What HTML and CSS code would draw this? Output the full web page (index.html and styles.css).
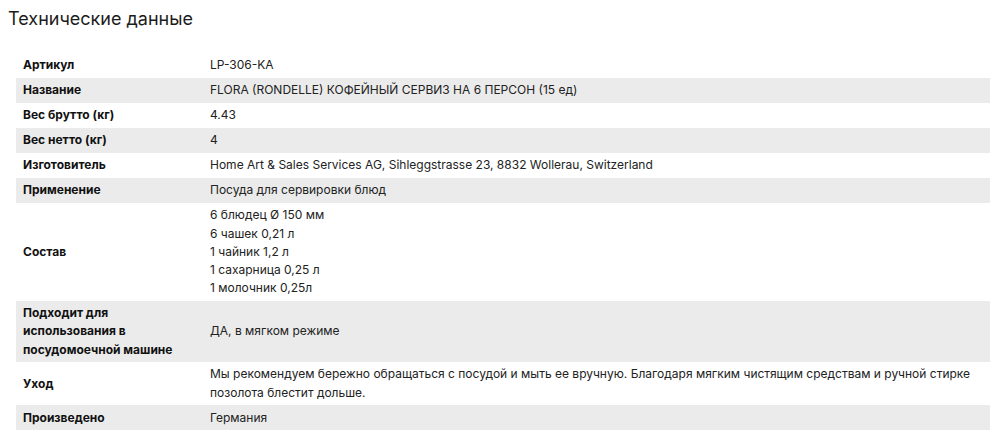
FILE: index.html
```html
<!DOCTYPE html>
<html lang="ru">
<head>
<meta charset="utf-8">
<link rel="stylesheet" href="styles.css">
</head>
<body>
<section class="specs">
  <h2 class="specs-title">Технические данные</h2>
  <table class="specs-table">
    <colgroup><col class="col-label"><col></colgroup>
    <tbody>
      <tr><th>Артикул</th><td>LP-306-KA</td></tr>
      <tr><th>Название</th><td>FLORA (RONDELLE) КОФЕЙНЫЙ СЕРВИЗ НА 6 ПЕРСОН (15 ед)</td></tr>
      <tr><th>Вес брутто (кг)</th><td>4.43</td></tr>
      <tr><th>Вес нетто (кг)</th><td>4</td></tr>
      <tr><th>Изготовитель</th><td>Home Art &amp; Sales Services AG, Sihleggstrasse 23, 8832 Wollerau, Switzerland</td></tr>
      <tr><th>Применение</th><td>Посуда для сервировки блюд</td></tr>
      <tr><th>Состав</th><td>6 блюдец Ø 150 мм<br>6 чашек 0,21 л<br>1 чайник 1,2 л<br>1 сахарница 0,25 л<br>1 молочник 0,25л</td></tr>
      <tr><th>Подходит для использования в посудомоечной машине</th><td>ДА, в мягком режиме</td></tr>
      <tr><th>Уход</th><td>Мы рекомендуем бережно обращаться с посудой и мыть ее вручную. Благодаря мягким чистящим средствам и ручной стирке позолота блестит дольше.</td></tr>
      <tr><th>Произведено</th><td>Германия</td></tr>
    </tbody>
  </table>
</section>
</body>
</html>
```
FILE: styles.css
```css
html, body {
  background: #ffffff;
}
body {
  margin: 8px;
  font-family: Inter, "Noto Sans", sans-serif;
  color: #1a1a1a;
}
.specs-title {
  margin: 0;
  font-size: 18px;
  font-weight: 400;
  line-height: 22px;
  color: #1c1c1c;
}
.specs-table {
  margin: 23px 2px 0 8px;
  width: calc(100% - 10px);
  border-collapse: collapse;
  table-layout: fixed;
  font-size: 12px;
  line-height: 18.2px;
}
.col-label {
  width: 187px;
}
.specs-table th,
.specs-table td {
  padding: 3.4px 7px;
  text-align: left;
  vertical-align: middle;
}
.specs-table th {
  font-weight: 700;
  color: #111;
}
.specs-table td {
  font-weight: 400;
  color: #222;
}
.specs-table tr:nth-child(even) {
  background: #ebebeb;
}
```
